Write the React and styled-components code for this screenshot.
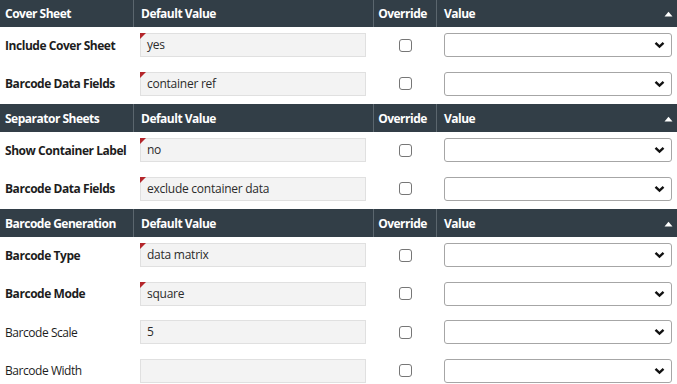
import React from "react";
import styled, { createGlobalStyle } from "styled-components";

const GlobalStyle = createGlobalStyle`
  html, body {
    margin: 0;
    padding: 0;
    background: #fff;
    font-family: "Open Sans", "Noto Sans", Arial, sans-serif;
    overflow: hidden;
  }
  * {
    box-sizing: border-box;
  }
`;

const sections = [
  {
    title: "Cover Sheet",
    rows: [
      { label: "Include Cover Sheet", value: "yes", required: true },
      { label: "Barcode Data Fields", value: "container ref", required: true },
    ],
  },
  {
    title: "Separator Sheets",
    rows: [
      { label: "Show Container Label", value: "no", required: true },
      { label: "Barcode Data Fields", value: "exclude container data", required: true },
    ],
  },
  {
    title: "Barcode Generation",
    rows: [
      { label: "Barcode Type", value: "data matrix", required: true },
      { label: "Barcode Mode", value: "square", required: true },
      { label: "Barcode Scale", value: "5" },
      { label: "Barcode Width", value: "" },
    ],
  },
];

function Chevron() {
  return (
    <svg width="11" height="8" viewBox="0 0 11 8">
      <path d="M1.5 1.8 L5.5 5.6 L9.5 1.8" fill="none" stroke="#111" strokeWidth="2.4" />
    </svg>
  );
}

function CaretUp() {
  return (
    <svg width="9" height="6" viewBox="0 0 9 6">
      <path d="M0.5 5.5 L4.5 0.8 L8.5 5.5 Z" fill="#fff" />
    </svg>
  );
}

function Section({ section }) {
  return (
    <Block>
      <HeaderRow>
        <HeadCell>{section.title}</HeadCell>
        <HeadCell $divided>Default Value</HeadCell>
        <HeadCell $divided $center>Override</HeadCell>
        <HeadCell $divided $last>
          Value
          <CaretUp />
        </HeadCell>
      </HeaderRow>
      {section.rows.map((row, i) => (
        <Row key={i}>
          <Label $required={row.required}>{row.label}</Label>
          <Cell>
            <DefaultBox $required={row.required}>{row.value}</DefaultBox>
          </Cell>
          <Cell $center>
            <Check />
          </Cell>
          <Cell>
            <Select>
              <Chevron />
            </Select>
          </Cell>
        </Row>
      ))}
    </Block>
  );
}

export default function App() {
  return (
    <>
      <GlobalStyle />
      <Table>
        {sections.map((s) => (
          <Section key={s.title} section={s} />
        ))}
      </Table>
    </>
  );
}

const Table = styled.div`
  width: 677px;
  margin-top: -1px;
`;

const Block = styled.section`
  display: flex;
  flex-direction: column;
`;

const cols = "133px 240px 63px 1fr";

const HeaderRow = styled.div`
  display: grid;
  grid-template-columns: ${cols};
  height: 28px;
  background: #323e47;
`;

const HeadCell = styled.div`
  display: flex;
  align-items: center;
  justify-content: ${(p) => (p.$center ? "center" : p.$last ? "space-between" : "flex-start")};
  padding: 1px ${(p) => (p.$last ? "4px" : "5px")} 0 ${(p) => (p.$center ? "0" : p.$divided ? "7px" : "5px")};
  color: #fff;
  font-size: 12px;
  font-weight: 700;
  letter-spacing: -0.5px;
  border-left: ${(p) => (p.$divided ? "1px solid #5b666e" : "none")};
`;

const Row = styled.div`
  display: grid;
  grid-template-columns: ${cols};
  height: 38.5px;
  align-items: center;
  padding-bottom: 2px;
`;

const Cell = styled.div`
  display: flex;
  justify-content: ${(p) => (p.$center ? "center" : "flex-start")};
  align-items: center;
`;

const Label = styled.div`
  padding-left: 5px;
  font-size: 12px;
  letter-spacing: -0.45px;
  font-weight: ${(p) => (p.$required ? 700 : 400)};
  color: #1d1d1d;
  white-space: nowrap;
`;

const DefaultBox = styled.div`
  position: relative;
  margin-left: 7px;
  width: 226px;
  height: 24px;
  background: #f3f3f3;
  border: 1px solid #e0e0e0;
  padding: 0 0 1px 6px;
  display: flex;
  align-items: center;
  font-size: 12px;
  letter-spacing: -0.25px;
  color: #2b2b2b;
  &::before {
    content: "";
    display: ${(p) => (p.$required ? "block" : "none")};
    position: absolute;
    left: -1px;
    top: -1px;
    border-top: 6px solid #b4262b;
    border-right: 6px solid transparent;
  }
`;

const Check = styled.span`
  display: block;
  width: 13px;
  height: 13px;
  margin-left: 2px;
  border: 1px solid #767676;
  border-radius: 3px;
  background: #fff;
`;

const Select = styled.div`
  margin-left: 8px;
  width: 228px;
  height: 24px;
  border: 1px solid #a6a6a6;
  border-radius: 3px;
  background: #fff;
  display: flex;
  align-items: center;
  justify-content: flex-end;
  padding-right: 6px;
`;
